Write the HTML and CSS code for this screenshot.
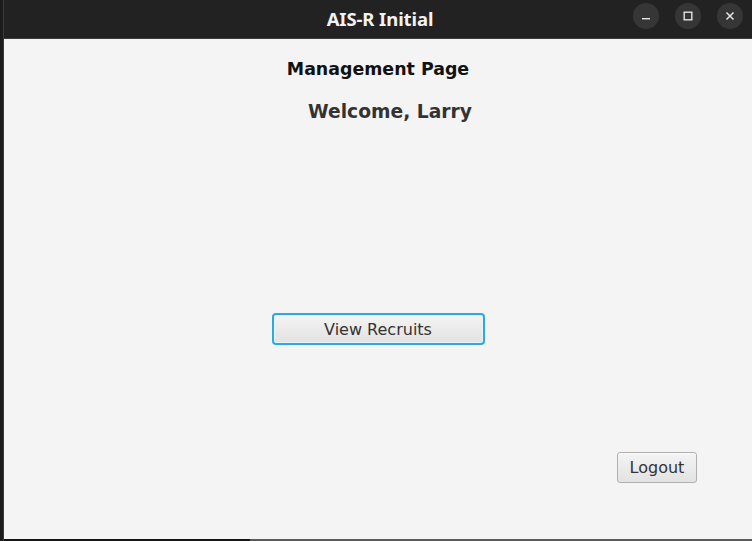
FILE: index.html
```html
<!DOCTYPE html>
<html>
<head>
<meta charset="utf-8">
<link rel="stylesheet" href="styles.css">
</head>
<body>
<div class="desktop">
  <div class="edge"></div>
  <div class="window">
    <div class="titlebar">
      <span class="title">AIS-R Initial</span>
      <div class="controls">
        <span class="ctl"><svg width="10" height="10" viewBox="0 0 10 10"><rect x="1" y="7" width="8" height="1.4" fill="#e6e6e6"/></svg></span>
        <span class="ctl"><svg width="10" height="10" viewBox="0 0 10 10"><rect x="1.2" y="1.2" width="7.6" height="7.6" fill="none" stroke="#e6e6e6" stroke-width="1.4"/></svg></span>
        <span class="ctl"><svg width="10" height="10" viewBox="0 0 10 10"><path d="M1.5 1.5 L8.5 8.5 M8.5 1.5 L1.5 8.5" stroke="#e6e6e6" stroke-width="1.5"/></svg></span>
      </div>
    </div>
    <div class="content">
      <div class="heading">Management Page</div>
      <div class="welcome">Welcome, Larry</div>
      <button class="btn focused view">View Recruits</button>
      <button class="btn logout">Logout</button>
    </div>
    <div class="bottom"><span class="b-dark"></span><span class="b-grey"></span></div>
  </div>
</div>
</body>
</html>
```
FILE: styles.css
```css
html, body {
  margin: 0;
  padding: 0;
  background: #1e1e1e;
  width: 752px;
  height: 541px;
  overflow: hidden;
}
.desktop {
  display: flex;
  width: 752px;
  height: 541px;
}
.edge {
  width: 3px;
  flex: none;
  background: #1c1c1c;
  border-right: 1px solid #3a3a3a;
}
.window {
  flex: 1;
  display: flex;
  flex-direction: column;
}
.titlebar {
  height: 38px;
  flex: none;
  background: #222222;
  border-bottom: 1px solid #3c3c3c;
  display: flex;
  align-items: center;
  justify-content: center;
  position: relative;
}
.title {
  font-family: "Noto Sans", sans-serif;
  font-weight: 700;
  font-size: 18.5px;
  color: #f2f2f2;
  margin-left: 4px;
  margin-top: -2px;
  letter-spacing: -0.1px;
}
.controls {
  position: absolute;
  right: 9px;
  top: 3px;
  display: flex;
  gap: 16px;
}
.ctl {
  width: 26px;
  height: 26px;
  border-radius: 50%;
  background: #363636;
  display: flex;
  align-items: center;
  justify-content: center;
}
.content {
  flex: 1;
  background: #f4f4f4;
  display: flex;
  flex-direction: column;
  align-items: center;
  font-family: "DejaVu Sans", sans-serif;
  padding-top: 19px;
}
.heading {
  font-weight: 700;
  font-size: 17.4px;
  line-height: 22px;
  color: #111;
}
.welcome {
  font-weight: 700;
  font-size: 18.7px;
  line-height: 24px;
  color: #333;
  margin-top: 20px;
  margin-left: 24px;
}
.btn {
  font-family: "DejaVu Sans", sans-serif;
  font-size: 16px;
  color: #333;
  background: linear-gradient(#f4f4f4, #e2e2e2);
  border: 1px solid #b0b0b0;
  border-radius: 3px;
  padding: 0;
  box-shadow: inset 0 1px 0 #fbfbfb;
}
.view {
  width: 213px;
  height: 32px;
  margin-top: 189px;
}
.focused {
  border: 2px solid #2fa9dd;
  box-shadow: inset 0 0 0 1px #e6f3f9;
  border-radius: 4px;
}
.logout {
  width: 80px;
  height: 31px;
  margin-top: 107px;
  align-self: flex-end;
  margin-right: 55px;
}
.bottom {
  height: 2px;
  flex: none;
  display: flex;
}
.b-dark {
  width: 246px;
  background: #141414;
}
.b-grey {
  flex: 1;
  background: #5a5a5a;
}
```
